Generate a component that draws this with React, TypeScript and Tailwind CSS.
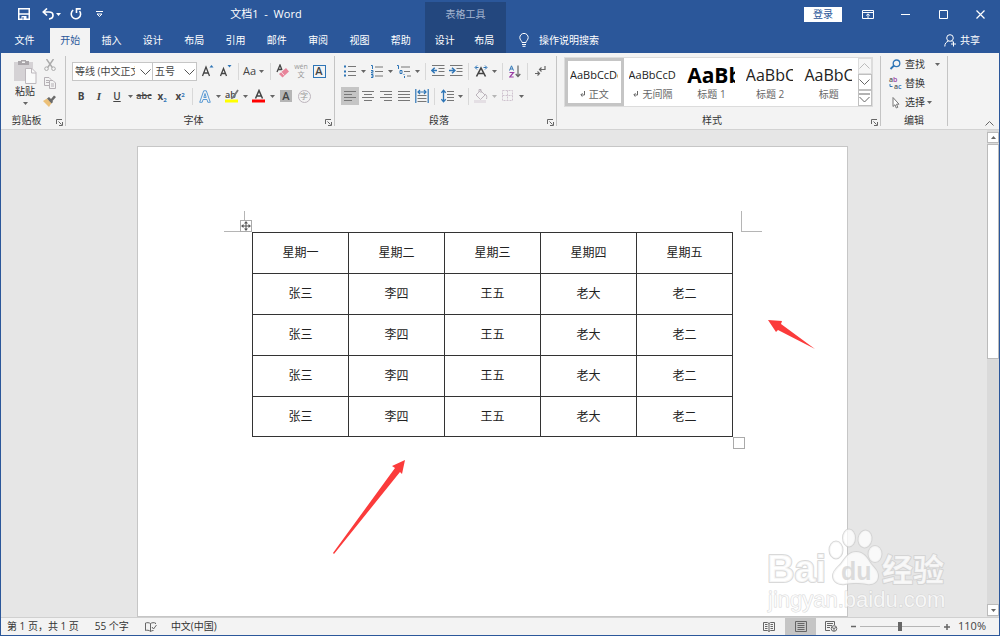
import { useState, type ReactNode } from "react";
import clsx from "clsx";

const tabs = ["开始", "插入", "设计", "布局", "引用", "邮件", "审阅", "视图", "帮助"];
const contextTabs = ["设计", "布局"];

const rows = [
  ["星期一", "星期二", "星期三", "星期四", "星期五"],
  ["张三", "李四", "王五", "老大", "老二"],
  ["张三", "李四", "王五", "老大", "老二"],
  ["张三", "李四", "王五", "老大", "老二"],
  ["张三", "李四", "王五", "老大", "老二"],
];

const styleItems = [
  { name: "正文", sample: "AaBbCcDd", css: "text-[11px]", mark: true },
  { name: "无间隔", sample: "AaBbCcDd", css: "text-[11px]", mark: true },
  { name: "标题 1", sample: "AaBb", css: "text-[21px] font-bold text-black", mark: false },
  { name: "标题 2", sample: "AaBbC", css: "text-[16px]", mark: false },
  { name: "标题", sample: "AaBbC", css: "text-[16px]", mark: false },
];

type IconProps = { w?: number; h?: number; children: ReactNode; className?: string };

function Icon({ w = 16, h = 16, children, className }: IconProps) {
  return (
    <svg
      width={w}
      height={h}
      viewBox={`0 0 ${w} ${h}`}
      fill="none"
      stroke="currentColor"
      className={clsx("shrink-0", className)}
      aria-hidden="true"
    >
      {children}
    </svg>
  );
}

function Caret({ className }: { className?: string }) {
  return (
    <Icon w={5} h={3} className={clsx("mx-[2px]", className)}>
      <path d="M0 0h5L2.5 3z" fill="currentColor" stroke="none" />
    </Icon>
  );
}

function Tool({ label, children, active, caret, faded }: {
  label: string;
  children: ReactNode;
  active?: boolean;
  caret?: boolean;
  faded?: boolean;
}) {
  return (
    <button
      aria-label={label}
      title={label}
      className={clsx(
        "flex h-[18px] shrink-0 items-center",
        caret ? "w-[27px]" : "w-[18px]",
        active && "bg-[#c5c5c5]"
      )}
    >
      <span className="flex w-[18px] shrink-0 justify-center">{children}</span>
      {caret && <Caret className={faded ? "text-[#b5b5b5]" : "text-[#666]"} />}
    </button>
  );
}

function Divider() {
  return <span className="mx-[3px] h-[17px] w-px shrink-0 bg-[#d8d8d8]" />;
}

function Group({ title, className, launcher, children }: {
  title: string;
  className: string;
  launcher?: boolean;
  children: ReactNode;
}) {
  return (
    <section className={clsx("flex shrink-0 flex-col border-r border-[#c4c4c4]", className)}>
      <div className="flex-1">{children}</div>
      <div className="flex h-3 items-center">
        <h2 className={clsx("flex-1 text-center", launcher && "pr-1")}>{title}</h2>
        {launcher && (
          <button aria-label={`${title}设置`} className="mr-[3px] w-[6px]">
            <Icon w={7} h={7} className="mt-1 text-[#666]">
              <path d="M.5 5V.5H6M2.5 2.5l3 3M6.5 3v3.5H3" />
            </Icon>
          </button>
        )}
      </div>
    </section>
  );
}

function Combo({ label, value, className }: { label: string; value: string; className: string }) {
  return (
    <div className={clsx("relative h-[19px] shrink-0", className)}>
      <select
        aria-label={label}
        className="h-full w-full appearance-none overflow-hidden border border-[#c6c6c6] bg-white pl-[2px] pr-[17px] text-[10px] leading-[16px]"
      >
        <option>{value}</option>
      </select>
      <Icon w={11} h={6} className="pointer-events-none absolute right-[2px] top-[7px] text-[#555]">
        <path d="M.5.5l5 5 5-5" />
      </Icon>
    </div>
  );
}

function Lines({ at, centre }: { at: [number, number][]; centre?: boolean }) {
  return (
    <Icon w={14} h={12} className="text-[#777]">
      {at.map(([y, len], i) => (
        <path key={i} d={`M${centre ? 7 - len / 2 : 1} ${y}.5h${len}`} />
      ))}
    </Icon>
  );
}

function TitleBar() {
  return (
    <div className="flex h-7">
      <div className="flex w-[424px] items-center">
        <div className="flex items-center pl-[17px]">
          <button aria-label="保存">
            <Icon w={12} h={12}>
              <path d="M.75.75h10.5v10.5H.75z" strokeWidth="1.5" />
              <path d="M1 6h10" strokeWidth="1.5" />
              <path d="M3.5 8h5v3.5h-5z" fill="currentColor" stroke="none" />
              <path d="M5 9v2.5" stroke="#2b579a" />
            </Icon>
          </button>
          <button aria-label="撤消" className="ml-3 flex items-center">
            <Icon w={12} h={12}>
              <path d="M5 .5L1.3 4 5 7.5M1.5 4H7c2.500 0 4 1.200 4 3.300S9.500 10.800 7 11" strokeWidth="1.7" />
            </Icon>
            <Caret />
          </button>
          <button aria-label="恢复" className="ml-[7px]">
            <Icon w={12} h={12}>
              <path d="M3.200 2.200A4.700 4.700 0 1 0 9.500 3M10.800.9H6.500v4" strokeWidth="1.600" />
            </Icon>
          </button>
          <button aria-label="自定义快速访问工具栏" className="ml-[14px]">
            <Icon w={7} h={7}>
              <path d="M0 .5h7M1 3h5L3.500 5.500z" />
            </Icon>
          </button>
        </div>
        <h1 className="flex-1 whitespace-pre pl-1 text-center text-[11px]">文档1  -  Word</h1>
      </div>
      <div className="mt-[2px] flex w-[81px] items-center justify-center bg-[#23477e] pb-[2px] text-[#a3b5d0]">
        表格工具
      </div>
      <div className="flex flex-1 items-center justify-end">
        <button className="h-[15px] w-[38px] bg-white text-[#2b579a]">登录</button>
        <button aria-label="功能区显示选项" className="ml-5">
          <Icon w={12} h={9}>
            <path d="M.5.5h11v8H.5zM.5 2.500h11M6 8V4M4.200 5.500L6 3.800l1.800 1.700" />
          </Icon>
        </button>
        <button aria-label="最小化" className="ml-[27px]">
          <Icon w={9} h={9}>
            <path d="M0 4.500h9" />
          </Icon>
        </button>
        <button aria-label="最大化" className="ml-[29px]">
          <Icon w={9} h={9}>
            <path d="M.5.5h8v8h-8z" />
          </Icon>
        </button>
        <button aria-label="关闭" className="ml-7 mr-[14px]">
          <Icon w={9} h={9}>
            <path d="M.5.5l8 8M8.500.5l-8 8" strokeWidth="1.200" />
          </Icon>
        </button>
      </div>
    </div>
  );
}

function TabBar({ tab, setTab }: { tab: string; setTab: (t: string) => void }) {
  return (
    <nav className="flex h-[25px] pb-px">
      <button className="w-[49px] pr-[2px]">文件</button>
      <div className="-mb-px mr-[3px] flex w-[372px]">
        {tabs.map((t) => (
          <button
            key={t}
            onClick={() => setTab(t)}
            className={clsx("mr-px flex-1 pb-px", t === tab && "bg-[#f3f3f3] text-[#2b579a]")}
          >
            {t}
          </button>
        ))}
      </div>
      <div className="-mb-px flex w-[81px] bg-[#23477e] pb-px pr-[2px]">
        {contextTabs.map((t) => (
          <button key={t} className="flex-1">
            {t}
          </button>
        ))}
      </div>
      <button className="ml-3 flex items-center gap-[9px]">
        <Icon w={12} h={14}>
          <path d="M4 9.500C4 7.800 1.800 7 1.800 4.600a4.200 4.200 0 0 1 8.400 0C10.200 7 8 7.800 8 9.500zM4 11.500h4M4.500 13.300h3" />
        </Icon>
        操作说明搜索
      </button>
      <button className="ml-auto mr-[19px] flex items-center gap-[3px]">
        <Icon w={13} h={13}>
          <circle cx="6" cy="4" r="3.300" />
          <path d="M.8 12.500c0-3 1.400-4.700 3.600-5.300M7.500 7.200l1.300.8M9.500 7.500v5M7 10h5" />
        </Icon>
        共享
      </button>
    </nav>
  );
}

function Clipboard() {
  return (
    <Group title="剪贴板" className="w-[65px]" launcher>
      <div className="flex gap-[6px] pl-[12px] pt-[3px]">
        <button className="flex w-6 flex-col items-center">
          <Icon w={24} h={25}>
            <path d="M1 3h19v19H1z" fill="#d5d2d5" stroke="none" />
            <path d="M5 2h3V1h5v1h3v4H5z" fill="#aaa6aa" stroke="none" />
            <path d="M9 2.500h3v1.500H9z" fill="#f3f3f3" stroke="none" />
            <path d="M12.500 9.500h6.500l4 4v11H12.500z" fill="#fafafa" stroke="#bdb8bd" />
            <path d="M18.500 9.500v4.500H23" stroke="#bdb8bd" />
          </Icon>
          <span className="mt-[1px]">粘贴</span>
          <Caret className="mt-[5px] text-[#666]" />
        </button>
        <div className="flex flex-col items-center gap-[6px]">
          <button aria-label="剪切">
            <Icon w={12} h={12} className="text-[#aaa]">
              <path d="M2.500 0l5.800 8.500M9.500 0L3.700 8.500" strokeWidth="1.400" />
              <circle cx="2.500" cy="9.700" r="1.800" />
              <circle cx="9.500" cy="9.700" r="1.800" />
            </Icon>
          </button>
          <button aria-label="复制">
            <Icon w={12} h={12} className="text-[#b5b0b5]">
              <path d="M.5.5H5l2 2v6H.5zM2 3.500h3M2 5.500h3" />
              <path d="M5.500 3.500H9l2.500 2.500v5.500h-6z" fill="#f3f3f3" />
              <path d="M7 7h3M7 9h3" />
            </Icon>
          </button>
          <button aria-label="格式刷">
            <Icon w={13} h={12}>
              <path d="M0 6l4-2.500 4.500 4.500L6 12z" fill="#ecc078" stroke="none" />
              <path d="M4 3.500l2-1.500L8 4l3-3.500 2 1.500-3.500 4 .5 1-1.500 1.500z" fill="#6a6a6a" stroke="none" />
            </Icon>
          </button>
        </div>
      </div>
    </Group>
  );
}

function FontGroup() {
  return (
    <Group title="字体" className="w-[269px]" launcher>
      <div className="flex flex-col gap-[7px] pl-[6px] pt-[6px] text-[#444]">
        <div className="flex h-[18px] items-center">
          <Combo label="字体" value="等线 (中文正文)" className="w-[81px]" />
          <Combo label="字号" value="五号" className="-ml-px w-[45px]" />
          <span className="w-[2px]" />
          <Tool label="增大字号">
            <Icon w={14} h={14}>
              <path d="M1.500 12L5 3l3.500 9M2.700 9h4.600" strokeWidth="1.300" />
              <path d="M8.500 3.500h4L10.500 1z" fill="#2e75b6" stroke="none" />
            </Icon>
          </Tool>
          <Tool label="减小字号">
            <Icon w={14} h={14}>
              <path d="M1.500 12l3-7.500 3 7.500M2.500 9.500h4" strokeWidth="1.300" />
              <path d="M8.500 1h4l-2 2.500z" fill="#2e75b6" stroke="none" />
            </Icon>
          </Tool>
          <Divider />
          <button aria-label="更改大小写" className="flex w-[25px] items-center text-[11px]">
            <span className="w-[15px]">Aa</span>
            <Caret className="text-[#666]" />
          </button>
          <Divider />
          <Tool label="清除所有格式">
            <Icon w={14} h={14}>
              <path d="M1 8l3-7 2 5M2 5.500h3.500" strokeWidth="1.300" />
              <path d="M3 10l7-6 3 3.500-6.500 6z" fill="#e8849a" stroke="none" />
              <path d="M5.300 8l3 3.500" stroke="#f7dce1" />
            </Icon>
          </Tool>
          <Tool label="拼音指南">
            <span className="flex flex-col items-center text-[7px] leading-[8px] text-[#999]">
              <span>wén</span>
              <span>文</span>
            </span>
          </Tool>
          <Tool label="字符边框">
            <span className="flex size-[13px] items-center justify-center border border-[#2e75b6] text-[11px] font-semibold">
              A
            </span>
          </Tool>
        </div>
        <div className="flex h-[18px] items-center">
          <Tool label="加粗">
            <b>B</b>
          </Tool>
          <Tool label="倾斜">
            <i className="font-['Liberation_Serif',serif] text-[11px] font-bold">I</i>
          </Tool>
          <Tool label="下划线" caret>
            <span className="font-semibold underline underline-offset-1">U</span>
          </Tool>
          <Tool label="删除线">
            <s className="text-[9px] font-semibold">abc</s>
          </Tool>
          <Tool label="下标">
            <span className="font-bold">
              x<sub className="text-[6px] text-[#2e75b6]">2</sub>
            </span>
          </Tool>
          <Tool label="上标">
            <span className="font-bold">
              x<sup className="text-[6px] text-[#2e75b6]">2</sup>
            </span>
          </Tool>
          <Divider />
          <Tool label="文本效果" caret>
            <Icon w={12} h={13}>
              <path d="M.7 12.300L4.700.8h2.600l4 11.500H8.800L8 9.500H4l-.8 2.800zM4.800 7.500h2.400L6 3.500z" stroke="#5b9bd5" />
            </Icon>
          </Tool>
          <Tool label="突出显示" caret>
            <Icon w={14} h={14} className="overflow-visible">
              <text x="0" y="9" fontSize="9" fontWeight="600" fill="#444" stroke="none">ab</text>
              <path d="M13 1L8 8.500l-2 1" stroke="#777" strokeWidth="1.800" />
              <path d="M0 10.500h13v3H0z" fill="#ffff00" stroke="none" />
            </Icon>
          </Tool>
          <Tool label="字体颜色" caret>
            <Icon w={14} h={14}>
              <path d="M3.500 9.500L7 1.500l3.500 8M4.700 7h4.600" strokeWidth="1.500" />
              <path d="M0 10.500h13v3H0z" fill="#ff0000" stroke="none" />
            </Icon>
          </Tool>
          <Tool label="字符底纹">
            <span className="flex size-3 items-center justify-center bg-[#b5b5b5] text-[11px] font-semibold">A</span>
          </Tool>
          <Tool label="带圈字符">
            <span className="flex size-[13px] items-center justify-center rounded-full border border-[#bdb5bd] text-[8px] text-[#999]">
              字
            </span>
          </Tool>
        </div>
      </div>
    </Group>
  );
}

function ParagraphGroup() {
  return (
    <Group title="段落" className="w-[222px]" launcher>
      <div className="flex flex-col gap-[7px] pl-[6px] pt-[6px] text-[#777]">
        <div className="flex h-[18px] items-center">
          <Tool label="项目符号" caret>
            <Icon w={12} h={12}>
              <path d="M4 1.500h8M4 6.500h8M4 10.500h8" />
              <path d="M0 1.500h2M0 6.500h2M0 10.500h2" stroke="#2e75b6" strokeWidth="2" />
            </Icon>
          </Tool>
          <Tool label="编号" caret>
            <Icon w={12} h={13}>
              <path d="M4 2h8M4 6.500h8M4 11h8" />
              <path d="M0 .5h1.500V4M0 5.500h2v1.500H.5v1H2.500M0 9.500h2v3H0M.5 11h1.500" stroke="#2e75b6" />
            </Icon>
          </Tool>
          <Tool label="多级列表" caret>
            <Icon w={14} h={13}>
              <path d="M4 2h9M7 6.500h6M10 11h4" />
              <path d="M0 .5h1.500V4M3 5.500h2v3H3zM7 9v1M7.500 11v2" stroke="#2e75b6" />
            </Icon>
          </Tool>
          <Divider />
          <Tool label="减少缩进量">
            <Icon w={14} h={12}>
              <path d="M1 .5h12.500M7.500 3.500h6M7.500 6.500h6M1 10.500h12.500" />
              <path d="M6 5.500H2M3.700 2.800L.8 5.500l2.900 2.700" stroke="#2e75b6" strokeWidth="1.500" />
            </Icon>
          </Tool>
          <Tool label="增加缩进量">
            <Icon w={14} h={12}>
              <path d="M1 .5h12.500M7.500 3.500h6M7.500 6.500h6M1 10.500h12.500" />
              <path d="M0 5.500h5M3 2.800l2.900 2.700L3 8.200" stroke="#2e75b6" strokeWidth="1.500" />
            </Icon>
          </Tool>
          <Divider />
          <Tool label="中文版式" caret>
            <Icon w={14} h={12}>
              <path d="M2.500 11.500L7 3l4.500 8.500M4 8.500h6" stroke="#444" strokeWidth="1.600" />
              <path d="M4.500 2.500h-3M3 .5l-2 2 2 2M9.500 2.500h3M11 .5l2 2-2 2" stroke="#2e75b6" />
            </Icon>
          </Tool>
          <Divider />
          <Tool label="排序">
            <Icon w={12} h={13}>
              <path d="M.5 5.500L2.500.8l2 4.700M1.200 4h2.600" stroke="#2e75b6" />
              <path d="M.5 7.500h4L.7 12h4" stroke="#9b3fa5" strokeWidth="1.200" />
              <path d="M9 .5v11M6.700 9L9 11.500 11.300 9" stroke="#666" strokeWidth="1.200" />
            </Icon>
          </Tool>
          <Divider />
          <Tool label="显示编辑标记">
            <Icon w={11} h={12}>
              <path d="M10 1v3.500H4.500M6.500 2.500l-2 2 2 2M0 8.500h4.500M2.500 6.500l2 2-2 2" stroke="#666" strokeWidth="1.200" />
            </Icon>
          </Tool>
        </div>
        <div className="flex h-[18px] items-center">
          <Tool label="左对齐" active>
            <Lines at={[[1, 12], [4, 8], [7, 12], [10, 8]]} />
          </Tool>
          <Tool label="居中">
            <Lines centre at={[[1, 12], [4, 8], [7, 12], [10, 8]]} />
          </Tool>
          <Tool label="右对齐">
            <Icon w={14} h={12}>
              <path d="M1 1.500h12M5 4.500h8M1 7.500h12M5 10.500h8" />
            </Icon>
          </Tool>
          <Tool label="两端对齐">
            <Lines at={[[1, 12], [4, 12], [7, 12], [10, 12]]} />
          </Tool>
          <Tool label="分散对齐">
            <Icon w={14} h={14}>
              <path d="M2.500 6.500h9M2.500 9.500h9M2.500 12.500h9" />
              <path d="M.8 0v14M13.200 0v14M3 3h8M5 1L3 3l2 2M9 1l2 2-2 2" stroke="#2e75b6" strokeWidth="1.200" />
            </Icon>
          </Tool>
          <Divider />
          <Tool label="行距" caret>
            <Icon w={13} h={14}>
              <path d="M6 2.500h7M6 5.500h7M6 8.500h7M6 11.500h7" />
              <path d="M2.500 1.500v11M.3 3.800l2.200-2.500 2.200 2.500M.3 10.200l2.200 2.500 2.200-2.500" stroke="#2e75b6" strokeWidth="1.300" />
            </Icon>
          </Tool>
          <Divider />
          <Tool label="底纹" caret faded>
            <Icon w={14} h={14} className="text-[#bdb5bd]">
              <path d="M2 6l4.500-4.500L11 6 6.500 10.500zM5 3V.5h2V4M11 5c2 1 2 3 1.500 5" />
              <path d="M0 11h12v3H0z" fill="#e4dfe4" stroke="none" />
            </Icon>
          </Tool>
          <Tool label="边框" caret>
            <Icon w={12} h={12} className="text-[#cfc3cf]">
              <path d="M.5.5h10v10H.5zM5.500.5v10M.5 5.500h10" strokeDasharray="2 1" />
            </Icon>
          </Tool>
        </div>
      </div>
    </Group>
  );
}

function StylesGroup() {
  return (
    <Group title="样式" className="w-[324px]" launcher>
      <div className="mx-[7px] mt-[1px] flex h-[50px] border border-[#dcdcdc] bg-white">
        {styleItems.map((s, i) => (
          <button
            key={s.name}
            className={clsx(
              "flex min-w-0 flex-1 flex-col border-[3px]",
              i === 0 ? "border-[#c5c5c5]" : "border-transparent"
            )}
          >
            <span
              className={clsx(
                "ml-[2px] mr-[3px] flex h-[27px] items-center self-stretch overflow-hidden whitespace-nowrap text-[#222]",
                s.css
              )}
            >
              {s.sample}
            </span>
            <span className="flex w-full items-center justify-center gap-1 text-[#666]">
              {s.mark && (
                <Icon w={5} h={6}>
                  <path d="M4.500 0v4H1M2.500 2.200L.8 4l1.700 1.700" />
                </Icon>
              )}
              {s.name}
            </span>
          </button>
        ))}
        <div className="flex w-[14px] flex-col text-[#666]">
          <button aria-label="上一行" className="flex flex-1 items-center justify-center border border-[#dcdcdc] bg-[#f6f6f6] text-[#bbb]">
            <Icon w={11} h={6}>
              <path d="M.5 5.500l5-5 5 5" />
            </Icon>
          </button>
          <button aria-label="下一行" className="flex flex-1 items-center justify-center border border-[#c0c0c0]">
            <Icon w={11} h={6}>
              <path d="M.5.5l5 5 5-5" />
            </Icon>
          </button>
          <button aria-label="其他" className="flex flex-1 items-center justify-center border border-[#c0c0c0]">
            <Icon w={11} h={10}>
              <path d="M0 1h11M.5 4l5 5 5-5" />
            </Icon>
          </button>
        </div>
      </div>
    </Group>
  );
}

function EditGroup() {
  return (
    <Group title="编辑" className="w-[67px]">
      <div className="flex flex-col gap-[7px] pl-[8px] pt-[2px]">
        <button className="flex h-3 items-center gap-[3px]">
          <Icon w={13} h={11}>
            <circle cx="7.500" cy="4.300" r="3.300" stroke="#2e75b6" strokeWidth="1.300" />
            <path d="M5 6.500L1.500 10" stroke="#2e75b6" strokeWidth="1.800" />
          </Icon>
          查找
          <Caret className="ml-[7px] text-[#666]" />
        </button>
        <button className="flex h-3 items-center gap-[3px]">
          {/* "ab" over "ac" with a small hook arrow */}
          <Icon w={13} h={14} className="overflow-visible">
            <text x="0" y="6" fontSize="7" fontWeight="600" fill="#555" stroke="none">
              a<tspan fill="#9b3fa5">b</tspan>
            </text>
            <text x="5" y="13" fontSize="7" fontWeight="600" fill="#555" stroke="none">
              a<tspan fill="#2e75b6">c</tspan>
            </text>
            <path d="M1 8v2.500h2.500" stroke="#2e75b6" />
          </Icon>
          替换
        </button>
        <button className="flex h-3 items-center gap-[3px]">
          <Icon w={13} h={13} className="text-[#777]">
            <path d="M4 1.500v9L6 8.700l1.300 3.300 1.500-.7L7.500 8.200H10z" fill="#fff" />
          </Icon>
          选择
          <Caret className="-ml-px text-[#666]" />
        </button>
      </div>
    </Group>
  );
}

function DocumentTable() {
  return (
    <div className="relative mx-auto w-[481px]">
      <table className="w-full table-fixed border-collapse text-[12px] text-[#222]">
        <tbody>
          {rows.map((row, i) => (
            <tr key={i} className="h-[41px] last:h-[40px]">
              {row.map((cell) => (
                <td key={cell} className="border border-[#333] p-0 text-center">
                  {cell}
                </td>
              ))}
            </tr>
          ))}
        </tbody>
      </table>
      {/* margin corner marks */}
      <span className="absolute -left-[28px] -top-[21px] h-[21px] w-[21px] border-b border-r border-[#b5b5b5]" />
      <span className="absolute -right-[29px] -top-[21px] h-[21px] w-[21px] border-b border-l border-[#b5b5b5]" />
      {/* move handle */}
      <span className="absolute -left-[12px] -top-[12px] border border-[#aaa] bg-white">
        <Icon w={10} h={10} className="text-[#555]">
          <path d="M5 1v8M1 5h8" />
          <path d="M5 0l2 2.500H3zM5 10l2-2.500H3zM0 5l2.500-2v4zM10 5L7.500 3v4z" fill="currentColor" stroke="none" />
        </Icon>
      </span>
      {/* resize handle */}
      <span className="absolute -bottom-[12px] -right-[12px] size-3 border border-[#aaa] bg-white" />
    </div>
  );
}

function Watermark() {
  return (
    <svg
      width="184"
      height="90"
      viewBox="0 0 184 90"
      className="pointer-events-none absolute bottom-[1px] right-[50px] font-['Liberation_Sans','Noto_Sans_CJK_SC',sans-serif]"
      fill="#fff"
      fillOpacity="0.75"
      stroke="#cfcfcf"
      strokeOpacity="0.8"
      strokeWidth="2"
      strokeLinejoin="round"
      paintOrder="stroke"
    >
      <text x="2" y="56" fontSize="38" fontWeight="700">Bai</text>
      <ellipse cx="71" cy="24" rx="6.500" ry="8.500" />
      <ellipse cx="84" cy="12" rx="6" ry="8.500" />
      <ellipse cx="100" cy="13" rx="6.500" ry="8.500" transform="rotate(10 100 13)" />
      <ellipse cx="110" cy="28" rx="6.500" ry="8" />
      <path d="M91 26c8 0 11 6 15 12 4 5 7 7 7 12 0 6-5 9-11 8-4-1-7-1-11-1s-7 0-11 1c-6 1-12-2-12-8 0-5 4-8 8-12 4-5 7-12 15-12z" />
      <text x="76" y="54" fontSize="25" fontWeight="700" fill="#d2d2d2" stroke="none">du</text>
      <text x="117" y="55" fontSize="31" fontWeight="700">经验</text>
      <text x="3" y="81" fontSize="22" strokeWidth="1">jingyan.baidu.com</text>
    </svg>
  );
}

function StatusBar() {
  return (
    <footer className="flex h-[18px] shrink-0 items-center border-t border-[#d0d0d0] pl-[6px]">
      <span className="pb-px">第 1 页，共 1 页</span>
      <span className="ml-4 pb-px">55 个字</span>
      <button aria-label="校对" className="ml-4">
        <Icon w={12} h={10} className="text-[#666]">
          <path d="M5.500 9.500V1.500C4 .5 2 .5.5 1v7.500c1.500-.5 3.500-.5 5 1 1-.8 2-1 3-1M5.500 1.500C7 .5 9 .5 10.500 1v1M7 5l1.500 2 3-4" />
        </Icon>
      </button>
      <span className="ml-[14px] pb-px">中文(中国)</span>
      <div className="ml-auto flex h-full items-center text-[#666]">
        <button aria-label="阅读视图" className="mr-[10px]">
          <Icon w={12} h={10}>
            <path d="M6 9.500V1.500L4.500.5h-4v8h4zM6 9.500L7.500 8.500h4v-8h-4L6 1.500M2 2.500h2.500M2 4.500h2.500M2 6.500h2.500M7.500 2.500H10M7.500 4.500H10M7.500 6.500H10" />
          </Icon>
        </button>
        <button aria-label="页面视图" className="flex h-full w-[31px] items-center justify-center bg-[#c5c5c5]">
          <Icon w={12} h={11}>
            <path d="M.5.5h11v10H.5zM2.500 2.500h7M2.500 4.500h7M2.500 6.500h7M2.500 8.500h7" />
          </Icon>
        </button>
        <button aria-label="Web 版式视图" className="ml-[9px]">
          <Icon w={13} h={11}>
            <path d="M5 9.500H.5v-9h9V4M2 2.500h6M2 4.500h5M2 6.500h3" />
            <circle cx="9" cy="7.500" r="2.800" />
            <path d="M7 6.500l2 1 2-1M9 7.500v2.500" />
          </Icon>
        </button>
        <button aria-label="缩小" className="ml-[13px]">
          <Icon w={5} h={5}>
            <path d="M0 2.500h5" strokeWidth="1.500" />
          </Icon>
        </button>
        <input
          type="range"
          aria-label="缩放级别"
          defaultValue={50}
          className="mx-1 h-3 w-[80px] appearance-none bg-transparent [&::-webkit-slider-runnable-track]:h-px [&::-webkit-slider-runnable-track]:bg-[#b5b5b5] [&::-webkit-slider-thumb]:-mt-1 [&::-webkit-slider-thumb]:h-[9px] [&::-webkit-slider-thumb]:w-1 [&::-webkit-slider-thumb]:appearance-none [&::-webkit-slider-thumb]:bg-[#666]"
        />
        <button aria-label="放大">
          <Icon w={6} h={6}>
            <path d="M0 3h6M3 0v6" strokeWidth="1.500" />
          </Icon>
        </button>
        <span className="ml-2 mr-[13px] pb-px text-[11px] text-[#444]">110%</span>
      </div>
    </footer>
  );
}

export default function App() {
  const [tab, setTab] = useState("开始");

  return (
    <div className="flex h-screen flex-col overflow-hidden border-x border-b border-[#2b579a] bg-[#f3f3f3] font-['Open_Sans','Noto_Sans_CJK_SC',sans-serif] text-[10px] leading-[12px] text-[#333]">
      <header className="shrink-0 bg-[#2b579a] text-white">
        <TitleBar />
        <TabBar tab={tab} setTab={setTab} />
      </header>

      <div className="flex h-[77px] shrink-0 border-b border-[#d2d2d2] py-[3px]">
        <Clipboard />
        <FontGroup />
        <ParagraphGroup />
        <StylesGroup />
        <EditGroup />
        <button aria-label="折叠功能区" className="ml-auto mr-[5px] self-end text-[#666]">
          <Icon w={9} h={5}>
            <path d="M.5 4.500l4-4 4 4" />
          </Icon>
        </button>
      </div>

      <main className="relative flex min-h-0 flex-1 bg-[#e6e6e6]">
        <div className="flex-1 overflow-hidden pr-[3px] pt-4">
          <div className="mx-auto h-full w-[711px] border border-[#c6c6c6] bg-white pt-[85px]">
            <DocumentTable />
          </div>
        </div>
        <div className="flex w-3 flex-col bg-[#dadada] pt-[2px]">
          <button aria-label="向上滚动" className="flex h-[11px] items-center justify-center border border-[#bbb] bg-white">
            <Icon w={5} h={3} className="text-[#666]">
              <path d="M0 3h5L2.500 0z" fill="currentColor" stroke="none" />
            </Icon>
          </button>
          <div className="mt-px h-[215px] border border-[#bbb] bg-white" />
          <button aria-label="向下滚动" className="mb-px mt-auto flex h-3 items-center justify-center border border-[#bbb] bg-white text-[#666]">
            <Caret />
          </button>
        </div>

        <svg width="76" height="96" viewBox="0 0 76 96" className="absolute left-[330px] top-[329px]" fill="#fb3b3b" aria-hidden="true">
          <path d="M74 1L61 7l3 2L2 94l1 1 66-82 2 2z" />
        </svg>
        <svg width="50" height="32" viewBox="0 0 50 32" className="absolute left-[766px] top-[189px]" fill="#fb3b3b" aria-hidden="true">
          <path d="M1 1l14 1-1 3 34 25-37-19-2 2z" />
        </svg>
        <Watermark />
      </main>

      <StatusBar />
    </div>
  );
}
